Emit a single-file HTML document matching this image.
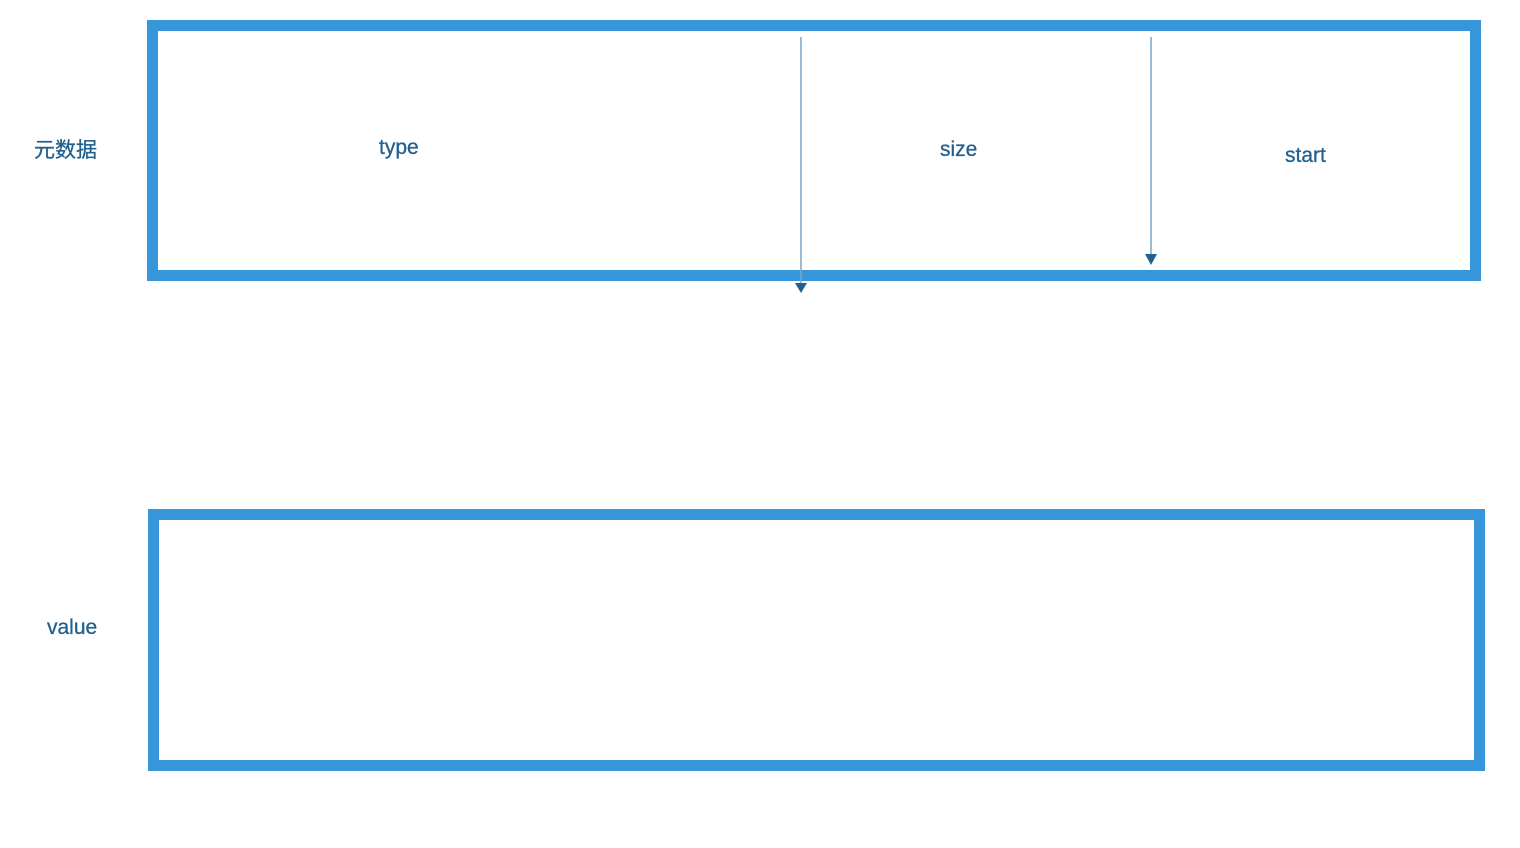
<!DOCTYPE html>
<html><head><meta charset="utf-8"><style>
body{margin:0;width:1520px;height:848px;background:#fff;overflow:hidden;position:relative;font-family:"Liberation Sans","Noto Sans CJK SC",sans-serif;color:#22608f}
.b{position:absolute;box-sizing:border-box;border:11px solid #3796d9}
.t{position:absolute;font-size:21px;line-height:21px;white-space:nowrap;-webkit-text-stroke:0.3px #22608f}
</style></head><body>
<div class="b" style="left:147px;top:20px;width:1334px;height:261px"></div>
<div class="b" style="left:148px;top:509px;width:1337px;height:262px"></div>
<div class="t" style="left:34px;top:140px">元数据</div>
<div class="t" style="left:379px;top:137px">type</div>
<div class="t" style="left:940px;top:139px">size</div>
<div class="t" style="left:1285px;top:145px">start</div>
<div class="t" style="left:47px;top:617px">value</div>
<svg width="1520" height="848" style="position:absolute;left:0;top:0">
<line x1="801" y1="37" x2="801" y2="286" stroke="#7aa6c8" stroke-width="1.5"/>
<polygon points="795,283 807,283 801,293" fill="#22608f"/>
<line x1="1151" y1="37" x2="1151" y2="257" stroke="#7aa6c8" stroke-width="1.5"/>
<polygon points="1145,254 1157,254 1151,265" fill="#22608f"/>
</svg>
</body></html>
